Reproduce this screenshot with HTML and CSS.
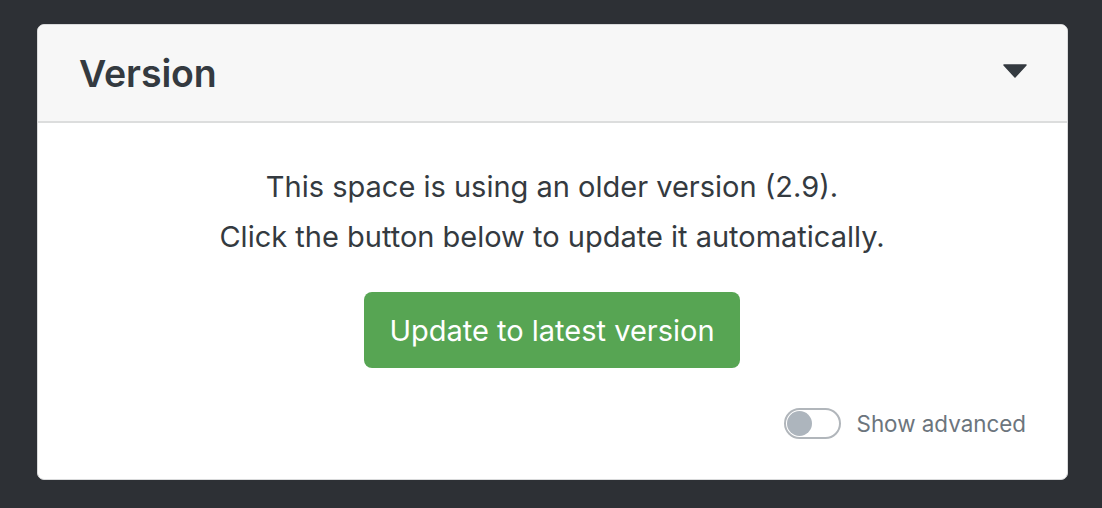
FILE: index.html
```html
<!DOCTYPE html>
<html>
<head>
<meta charset="utf-8">
<link rel="stylesheet" href="styles.css">
</head>
<body>
<div class="card">
  <div class="card-header">
    <h4 class="title">Version</h4>
    <svg class="caret" width="24" height="14" viewBox="0 0 24 14"><path d="M1 1 H23 L12 13 Z" fill="#343a40" stroke="#343a40" stroke-width="1.5" stroke-linejoin="round"/></svg>
  </div>
  <div class="card-body">
    <p class="msg">This space is using an older version (2.9).<br>Click the button below to update it automatically.</p>
    <button class="btn">Update to latest version</button>
    <div class="adv">
      <span class="switch"><span class="knob"></span></span>
      <span class="adv-label">Show advanced</span>
    </div>
  </div>
</div>
</body>
</html>
```
FILE: styles.css
```css
html, body { margin: 0; padding: 0; }
body {
  background: #2d3035;
  font-family: Inter, "Noto Sans", sans-serif;
  color: #343a40;
  padding: 24px 34px 28px 37px;
  height: 508px;
  box-sizing: border-box;
}
.card {
  width: 1031px;
  height: 456px;
  box-sizing: border-box;
  background: #fff;
  border: 1px solid #d9dadb;
  border-radius: 7px;
  overflow: hidden;
  display: flex;
  flex-direction: column;
}
.card-header {
  background: #f7f7f7;
  border-bottom: 2px solid #dcdddd;
  height: 98px;
  box-sizing: border-box;
  display: flex;
  align-items: center;
  justify-content: space-between;
  padding: 0 40px 0 41px;
}
.title {
  margin: 0;
  font-size: 37.5px;
  font-weight: 600;
  color: #343a40;
  letter-spacing: -0.1px;
}
.caret { display: block; margin-top: -5px; }
.card-body {
  flex: 1;
  display: flex;
  flex-direction: column;
  align-items: center;
  padding: 39px 41px 0 40px;
}
.msg {
  margin: 0;
  text-align: center;
  font-size: 29px;
  line-height: 50px;
  color: #343a40;
}
.btn {
  margin-top: 30px;
  width: 376px;
  height: 76px;
  border: none;
  border-radius: 8px;
  background: #57a553;
  color: #fff;
  font-family: inherit;
  font-size: 29px;
  padding: 0;
}
.adv {
  align-self: flex-end;
  display: flex;
  align-items: center;
  gap: 16px;
  margin-top: 40px;
}
.switch {
  width: 52px;
  height: 27px;
  border: 2px solid #b1b6bb;
  border-radius: 16px;
  display: flex;
  align-items: center;
  padding-left: 1px;
  box-sizing: content-box;
}
.knob {
  width: 25px;
  height: 25px;
  border-radius: 50%;
  background: #adb5bd;
}
.adv-label {
  font-size: 22.4px;
  color: #6c757d;
}
```
